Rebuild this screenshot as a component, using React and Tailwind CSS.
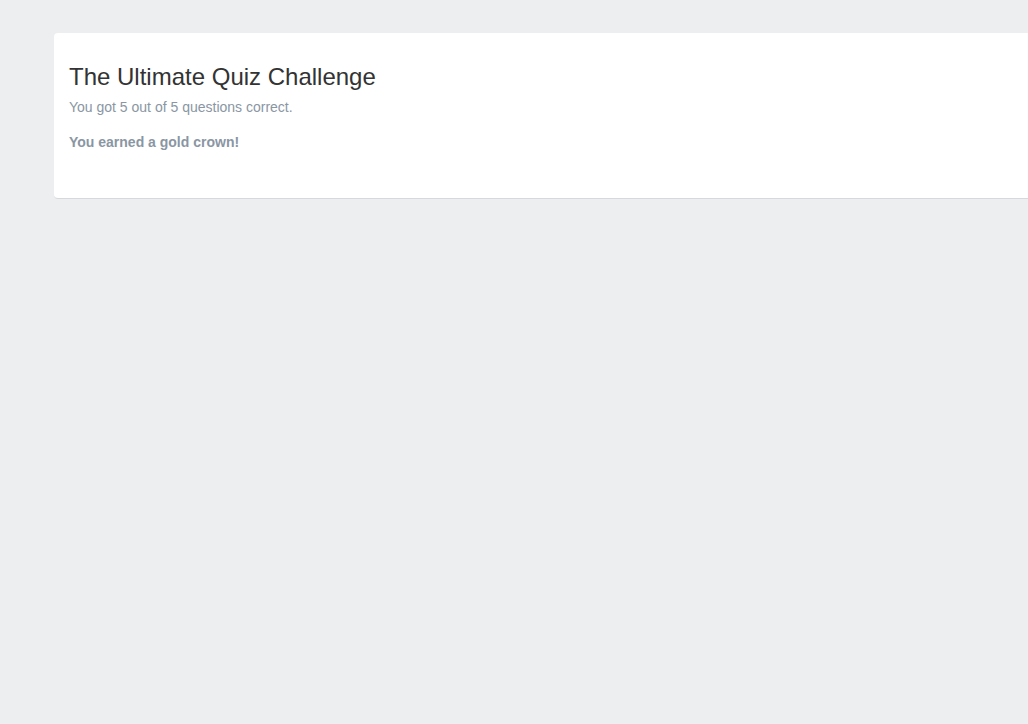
import React from 'react';

const App = () => {
  return (
    <div className="min-h-screen w-full overflow-hidden bg-[#edeef0] pt-[33px] font-['Liberation_Sans',Arial,sans-serif]">
      {/* Result card */}
      <div className="ml-[54px] -mr-6 rounded-[4px] border-b border-[#d6d8db] bg-white px-[15px] pt-[28px] pb-[46px]">
        <h1 className="text-[24px] leading-[32px] text-[#333333]">The Ultimate Quiz Challenge</h1>
        <p className="mt-[4px] text-[14px] leading-[20px] text-[#8a96a3]">You got 5 out of 5 questions correct.</p>
        <p className="mt-[15px] text-[14px] font-bold leading-[20px] text-[#8a96a3]">You earned a gold crown!</p>
      </div>
    </div>
  );
};

export default App;
